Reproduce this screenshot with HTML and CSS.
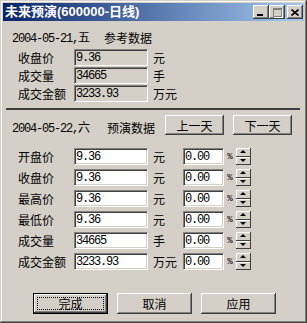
FILE: index.html
```html
<!DOCTYPE html>
<html lang="zh-CN">
<head>
  <meta charset="UTF-8" />
  <title>未来预演</title>
  <link rel="stylesheet" href="styles.css">
</head>
<body>
  <div class="window">
    <!-- Title bar -->
    <div class="titlebar">
      <span class="title">未来预演(600000-日线)</span>
      <span class="cap-btn min"><i></i></span>
      <span class="cap-btn max"><i></i></span>
      <span class="cap-btn close">
        <svg width="8" height="7" viewBox="0 0 8 7"><path d="M0.5 0.5 L7.5 6.5 M7.5 0.5 L0.5 6.5" stroke="#000" stroke-width="1.6" fill="none"/></svg>
      </span>
    </div>

    <div class="client">
      <!-- Reference data -->
      <div class="head ref-head">
        <span class="date"><span class="num">2004-05-21,</span>五</span>
        <span>参考数据</span>
      </div>
      <div class="ref-rows">
        <div class="row"><span class="lbl">收盘价</span><input class="box ro" value="9.36" readonly><span class="unit">元</span></div>
        <div class="row"><span class="lbl">成交量</span><input class="box ro" value="34665" readonly><span class="unit">手</span></div>
        <div class="row"><span class="lbl">成交金额</span><input class="box ro" value="3233.93" readonly><span class="unit">万元</span></div>
      </div>

      <div class="sep"></div>

      <!-- Forecast data -->
      <div class="head pred-head">
        <span class="date"><span class="num">2004-05-22,</span>六</span>
        <span class="tag">预演数据</span>
        <button class="btn day">上一天</button>
        <button class="btn day">下一天</button>
      </div>
      <div class="form" id="form"></div>

      <div class="actions">
        <button class="btn act default"><span>完成</span></button>
        <button class="btn act">取消</button>
        <button class="btn act">应用</button>
      </div>
    </div>
  </div>

  <script>
    const fields = [
      { label: "开盘价", value: "9.36", unit: "元" },
      { label: "收盘价", value: "9.36", unit: "元" },
      { label: "最高价", value: "9.36", unit: "元" },
      { label: "最低价", value: "9.36", unit: "元" },
      { label: "成交量", value: "34665", unit: "手" },
      { label: "成交金额", value: "3233.93", unit: "万元" }
    ];

    const form = document.getElementById("form");
    fields.forEach(f => {
      const row = document.createElement("div");
      row.className = "row";
      row.innerHTML = `
        <span class="lbl">${f.label}</span>
        <input class="box" value="${f.value}">
        <span class="unit">${f.unit}</span>
        <input class="box pct" value="0.00">
        <span class="pct-sign">%</span>
        <span class="spin"><i class="up"></i><i class="down"></i></span>
      `;
      form.appendChild(row);
    });
  </script>
</body>
</html>
```

FILE: styles.css
```css
body {
  margin: 0;
  font-family: "Noto Sans CJK SC", sans-serif;
  font-size: 12px;
  color: #000;
  background: #d4d0c8;
}

.window {
  width: 307px;
  height: 323px;
  box-sizing: border-box;
  padding: 3px;
  background: #d4d0c8;
  box-shadow: inset -1px -1px #404040, inset 1px 1px #d4d0c8,
              inset -2px -2px #808080, inset 2px 2px #fff;
}

.titlebar {
  height: 18px;
  display: flex;
  align-items: center;
  padding: 0 1px 0 2px;
  background: linear-gradient(to right, #0a246a, #a6caf0);
}

.title {
  flex: 1;
  color: #fff;
  font-family: "Liberation Sans", "Noto Sans CJK SC", sans-serif;
  font-weight: bold;
  font-size: 13px;
  line-height: 18px;
}

.cap-btn {
  width: 16px;
  height: 14px;
  box-sizing: border-box;
  display: flex;
  align-items: center;
  justify-content: center;
  background: #d4d0c8;
  box-shadow: inset -1px -1px #404040, inset 1px 1px #fff,
              inset -2px -2px #808080, inset 2px 2px #d4d0c8;
}

.cap-btn.min i {
  width: 6px;
  height: 2px;
  background: #000;
  margin: 6px 2px 0 0;
}

.cap-btn.max i {
  width: 9px;
  height: 9px;
  box-sizing: border-box;
  border: 1px solid #808080;
  border-top-width: 2px;
  box-shadow: 1px 1px #fff;
}

.cap-btn.close {
  margin-left: 2px;
}

.client {
  display: flex;
  flex-direction: column;
}

.num {
  font-family: "Liberation Mono", monospace;
  letter-spacing: -1.2px;
}

.head {
  display: flex;
  align-items: center;
  padding-left: 9px;
}

.ref-head {
  margin-top: 9px;
  height: 14px;
}

.ref-head .date {
  width: 92px;
}

.ref-rows {
  margin-top: 5px;
  display: flex;
  flex-direction: column;
  gap: 1px;
}

.row {
  height: 17px;
  display: flex;
  align-items: center;
  padding-left: 15px;
}

.lbl {
  width: 56px;
}

.box {
  width: 74px;
  height: 17px;
  box-sizing: border-box;
  margin: 0;
  padding: 0 1px;
  border: 1px solid;
  border-color: #808080 #fff #fff #808080;
  box-shadow: inset 1px 1px #404040, inset -1px -1px #d4d0c8;
  background: #fff;
  font-family: "Liberation Mono", monospace;
  font-size: 12px;
  letter-spacing: -1.2px;
  color: #000;
  outline: none;
}

.box.ro {
  background: #d4d0c8;
}

.unit {
  width: 35px;
  padding-left: 5px;
  box-sizing: border-box;
}

.box.pct {
  width: 41px;
}

.pct-sign {
  width: 12px;
  font-family: "Liberation Mono", monospace;
  font-size: 9px;
  text-align: center;
}

.spin {
  width: 15px;
  height: 17px;
  display: flex;
  flex-direction: column;
}

.spin i {
  flex: 1;
  position: relative;
  background: #d4d0c8;
  box-shadow: inset -1px -1px #404040, inset 1px 1px #fff;
}

.spin i::after {
  content: "";
  position: absolute;
  left: 4px;
  top: 3px;
  border-left: 3px solid transparent;
  border-right: 3px solid transparent;
}

.spin .up::after {
  border-bottom: 3px solid #000;
  top: 2px;
}

.spin .down::after {
  top: 2px;
  border-top: 3px solid #000;
}

.sep {
  margin: 6px 0 0 3px;
  width: 294px;
  height: 2px;
  background: #404040;
}

.pred-head {
  margin-top: 5px;
  height: 20px;
}

.pred-head .date {
  width: 95px;
  padding-top: 4px;
}

.pred-head .tag {
  width: 58px;
  padding-top: 4px;
}

.btn {
  margin: 0;
  padding: 0;
  border: none;
  background: #d4d0c8;
  font-family: "Noto Sans CJK SC", sans-serif;
  font-size: 12px;
  color: #000;
  box-shadow: inset -1px -1px #404040, inset 1px 1px #fff,
              inset -2px -2px #808080, inset 2px 2px #d4d0c8;
}

.btn.day {
  width: 59px;
  height: 20px;
  margin-right: 9px;
}

.form {
  margin-top: 13px;
  display: flex;
  flex-direction: column;
  gap: 4px;
}

.actions {
  margin-top: 23px;
  padding-left: 30px;
  display: flex;
  gap: 9px;
}

.btn.act {
  width: 75px;
  height: 21px;
}

.btn.default {
  padding: 4px;
  box-shadow: inset 0 0 0 1px #000, inset -2px -2px #404040, inset 2px 2px #fff,
              inset -3px -3px #808080;
}

.btn.default span {
  display: block;
  height: 100%;
  box-sizing: border-box;
  border: 1px dotted #000;
  line-height: 11px;
}
```
